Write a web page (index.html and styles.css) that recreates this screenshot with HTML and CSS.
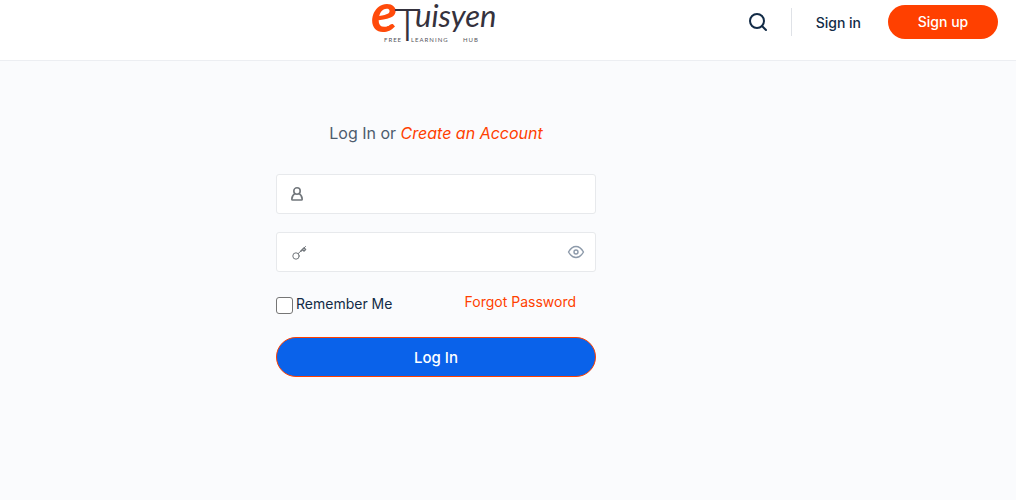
FILE: index.html
```html
<!DOCTYPE html>
<html lang="en">
<head>
    <meta charset="UTF-8">
    <meta name="viewport" content="width=device-width, initial-scale=1.0">
    <title>eTuisyen - Log In</title>
    <link rel="stylesheet" href="styles.css">
</head>
<body>
    <header class="site-header">
        <a href="#" class="logo">
            <svg width="128" height="50" viewBox="0 0 128 50" role="img" aria-label="eTuisyen Free Learning Hub">
                <text class="logo-e" x="-1" y="32">e</text>
                <text class="logo-t" x="22" y="41">T</text>
                <text class="logo-name" x="43" y="27">uisyen</text>
                <text class="logo-tagline" x="12" y="42">FREE</text>
                <text class="logo-tagline" x="39" y="42">LEARNING</text>
                <text class="logo-tagline" x="91" y="42">HUB</text>
            </svg>
        </a>
        <nav class="header-nav">
            <button type="button" class="search-btn" aria-label="Search">
                <svg width="20" height="20" viewBox="0 0 20 20">
                    <circle cx="10" cy="9" r="7"/>
                    <path d="M15 14l4 4"/>
                </svg>
            </button>
            <span class="divider"></span>
            <a href="#" class="signin">Sign in</a>
            <a href="#" class="signup">Sign up</a>
        </nav>
    </header>

    <main class="content">
        <form class="login-form">
            <h2 class="heading">Log In or <a href="#">Create an Account</a></h2>

            <div class="field">
                <svg class="icon-user" width="14" height="16" viewBox="0 0 14 16">
                    <circle cx="6" cy="5" r="3.200"/>
                    <path d="M3.800 7.600C2 8.800.800 10.600.800 13.200c0 .5.300.8.800.8h8.800c.5 0 .8-.3.800-.8 0-2.600-1.200-4.400-3-5.600"/>
                </svg>
                <input type="text" id="username" aria-label="Username">
            </div>

            <div class="field">
                <svg class="icon-key" width="16" height="16" viewBox="0 0 16 16">
                    <circle cx="5" cy="12" r="3.200"/>
                    <path d="M7.200 9.600L14.500 2.500"/>
                    <path class="key-teeth" d="M9.800 7.200l3.200-3.200 1.500 1.500-1.500 1.500-1.500-1.500"/>
                </svg>
                <input type="password" id="password" aria-label="Password">
                <button type="button" class="toggle-password" aria-label="Show password">
                    <svg width="18" height="14" viewBox="0 0 18 14">
                        <path d="M1.500 7C3.500 3.500 6 1.500 9 1.500S14.500 3.500 16.500 7C14.500 10.500 12 12.500 9 12.500S3.500 10.500 1.500 7z"/>
                        <circle cx="9" cy="7" r="2"/>
                    </svg>
                </button>
            </div>

            <div class="options">
                <div class="remember">
                    <input type="checkbox" id="remember">
                    <label for="remember">Remember Me</label>
                </div>
                <a href="#" class="forgot">Forgot Password</a>
            </div>

            <button type="submit" class="login-btn">Log In</button>
        </form>
    </main>
</body>
</html>
```

FILE: styles.css
```css
* {
    box-sizing: border-box;
}
body {
    margin: 0;
    min-height: 100vh;
    font-family: Inter, "Liberation Sans", sans-serif;
    font-size: 14px;
    color: #122b46;
    background-color: #fafbfd;
}
a {
    color: #ff4000;
    text-decoration: none;
}
button {
    font-family: inherit;
    cursor: pointer;
}

/* Header */
.site-header {
    display: grid;
    height: 61px;
    padding-right: 18px;
    background-color: #fff;
    border-bottom: 1px solid #eceef2;
}
.logo,
.header-nav {
    grid-area: 1 / 1;
}
.logo {
    justify-self: center;
    margin-right: 126px;
}
.logo svg {
    display: block;
}
.logo-e {
    font: italic 700 54px Lato, sans-serif;
    fill: #ff4a0a;
}
.logo-t {
    font: 300 46px Lato, sans-serif;
    fill: #35323d;
}
.logo-name {
    font: italic 400 31px Lato, sans-serif;
    fill: #35323d;
}
.logo-tagline {
    font: 400 6px Lato, sans-serif;
    letter-spacing: 1px;
    fill: #55555c;
}
.header-nav {
    justify-self: end;
    align-self: start;
    display: flex;
    align-items: center;
    padding-top: 5px;
    font-weight: 500;
}
.search-btn {
    display: flex;
    padding: 0;
    border: none;
    background: none;
}
.search-btn svg {
    fill: none;
    stroke: #122b46;
    stroke-width: 2;
    stroke-linecap: round;
}
.divider {
    width: 1px;
    height: 28px;
    margin: 0 24px;
    background-color: #dfe2e7;
}
.signin {
    color: #122b46;
}
.signup {
    width: 110px;
    margin-left: 27px;
    border-radius: 17px;
    line-height: 34px;
    text-align: center;
    color: #fff;
    background-color: #ff4000;
}

/* Login form */
.content {
    padding: 60px 144px 60px 0;
}
.login-form {
    width: 320px;
    margin: 0 auto;
}
.heading {
    margin: 0 0 29px;
    font-size: 16px;
    font-weight: 400;
    line-height: 24px;
    text-align: center;
    color: #4d5c6d;
}
.heading a {
    font-style: italic;
}
.field {
    display: flex;
    align-items: center;
    height: 40px;
    margin-bottom: 18px;
    padding: 0 10px 0 14px;
    border: 1px solid #e7e9ec;
    border-radius: 3px;
    background-color: #fff;
}
.field input {
    flex: 1;
    min-width: 0;
    padding: 0 8px;
    border: none;
    outline: none;
    font: inherit;
    background: none;
}
.field svg {
    fill: none;
    stroke: #72777c;
    stroke-linecap: round;
    stroke-linejoin: round;
}
.icon-user {
    stroke-width: 1.6;
}
.icon-key {
    stroke-width: 1;
}
.key-teeth {
    stroke-width: 1.6;
}
.toggle-password {
    display: flex;
    padding: 0;
    border: none;
    background: none;
}
.toggle-password svg {
    stroke: #8d9aaa;
    stroke-width: 1.4;
}
.options {
    display: flex;
    justify-content: space-between;
    align-items: flex-start;
    padding: 2px 20px 0 0;
    line-height: 20px;
}
.remember {
    display: flex;
    align-items: center;
    gap: 3px;
    padding-top: 2px;
}
.remember input {
    appearance: none;
    width: 17px;
    height: 17px;
    margin: 3px 0 0;
    border: 1px solid #767676;
    border-radius: 3px;
    background-color: #fff;
}
.remember input:checked {
    background-color: #0a62ea;
}
.login-btn {
    width: 100%;
    height: 40px;
    margin-top: 23px;
    border: 1px solid #ff4000;
    border-radius: 20px;
    font-size: 15px;
    font-weight: 500;
    color: #fff;
    background-color: #0a62ea;
}
```
